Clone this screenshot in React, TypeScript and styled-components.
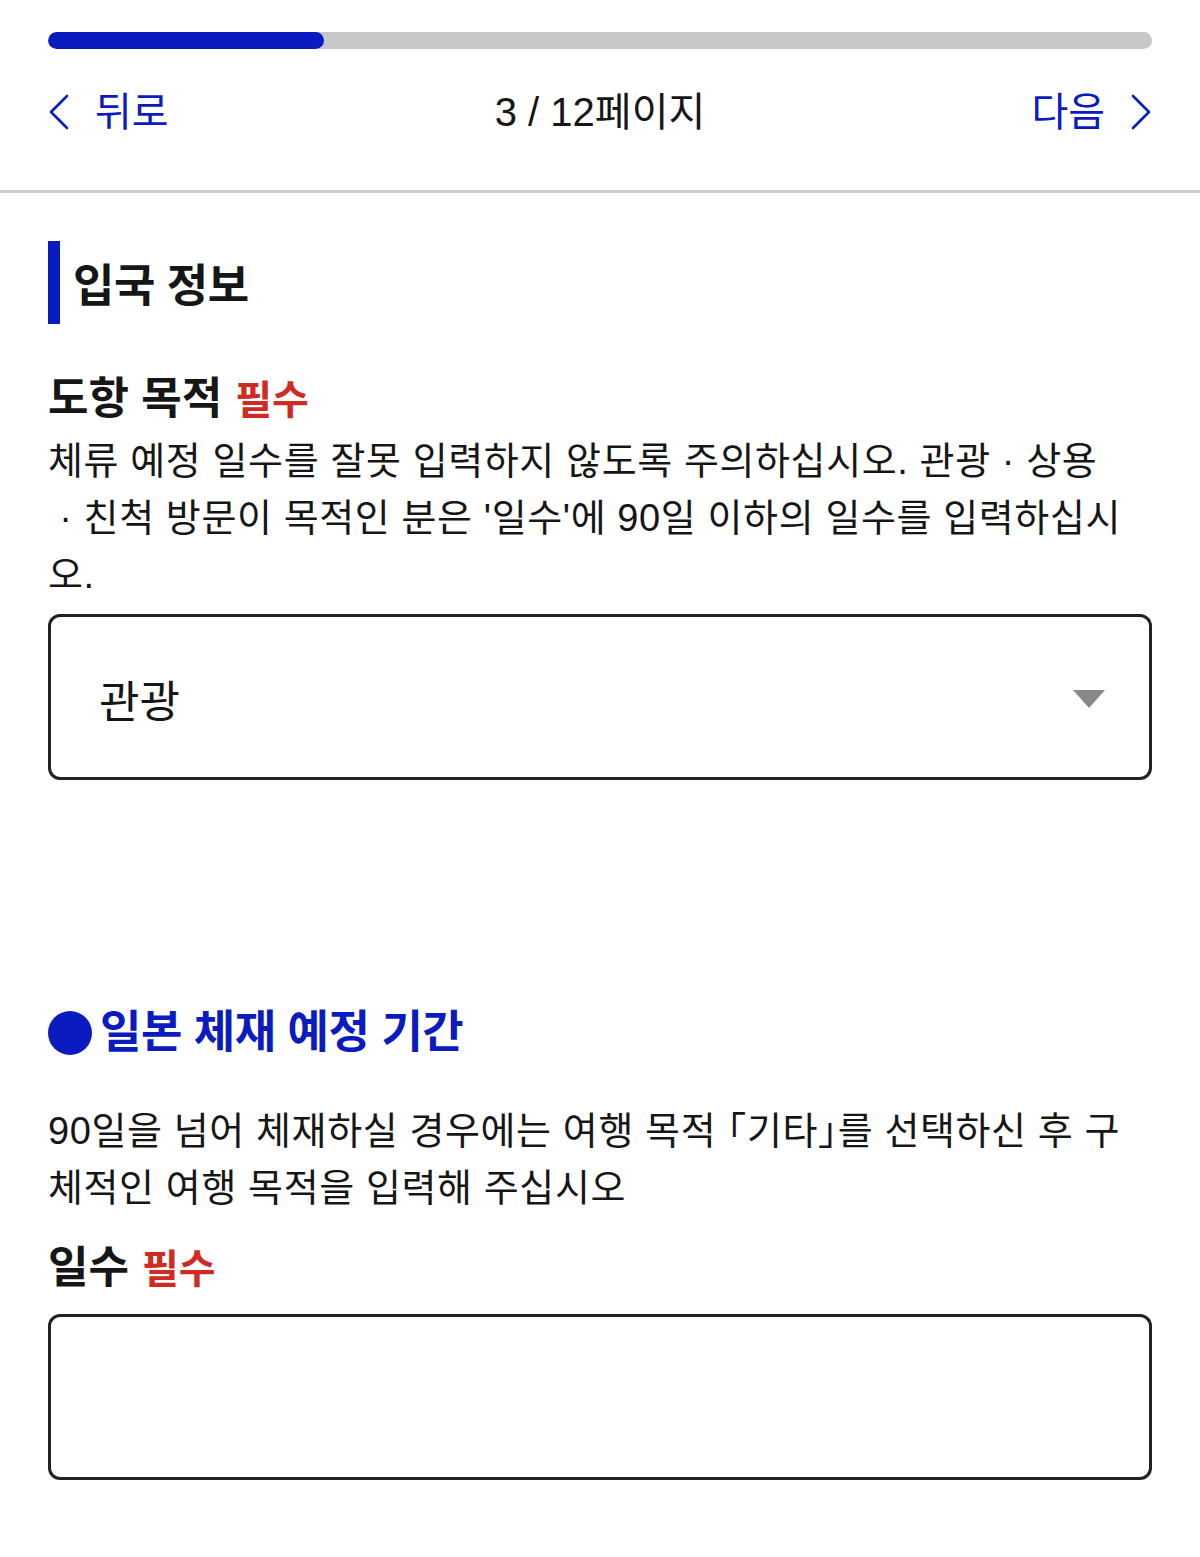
import React from "react";
import styled, { createGlobalStyle } from "styled-components";

const colors = {
  blue: "#0a1bbf",
  red: "#cf2a24",
  text: "#161616",
  track: "#c8c8ca",
  line: "#cccccc",
  border: "#222222",
  arrow: "#888888",
};

const GlobalStyle = createGlobalStyle`
  html, body {
    margin: 0;
    padding: 0;
    background: #ffffff;
  }
  body {
    font-family: "Liberation Sans", "Noto Sans CJK KR", sans-serif;
    color: ${colors.text};
  }
  * {
    box-sizing: border-box;
  }
`;

const ChevronLeft = () => (
  <svg width="21" height="36" viewBox="0 0 21 36" fill="none">
    <polyline
      points="19,2 3,18 19,34"
      stroke={colors.blue}
      strokeWidth="2.6"
      strokeLinecap="round"
      strokeLinejoin="round"
    />
  </svg>
);

const ChevronRight = () => (
  <svg width="21" height="36" viewBox="0 0 21 36" fill="none">
    <polyline
      points="2,2 18,18 2,34"
      stroke={colors.blue}
      strokeWidth="2.6"
      strokeLinecap="round"
      strokeLinejoin="round"
    />
  </svg>
);

const CaretDown = () => (
  <svg width="32" height="18" viewBox="0 0 32 18">
    <polygon points="0,0 32,0 16,18" fill={colors.arrow} />
  </svg>
);

const App = () => {
  const current = 3;
  const total = 12;

  return (
    <>
      <GlobalStyle />
      <Header>
        <Progress>
          <ProgressFill style={{ width: `${(current / total) * 100}%` }} />
        </Progress>
        <Nav>
          <NavButton>
            <ChevronLeft />
            <span>뒤로</span>
          </NavButton>
          <PageCount>
            {current} / {total}페이지
          </PageCount>
          <NavButton>
            <span>다음</span>
            <ChevronRight />
          </NavButton>
        </Nav>
      </Header>

      <Main>
        <SectionTitle>입국 정보</SectionTitle>

        <Label>
          도항 목적<Required>필수</Required>
        </Label>
        <Help>
          체류 예정 일수를 잘못 입력하지 않도록 주의하십시오. 관광 · 상용
          <br />
          {"\u00a0"}· 친척 방문이 목적인 분은 '일수'에 90일 이하의 일수를
          입력하십시
          <br />
          오.
        </Help>
        <SelectBox>
          <span>관광</span>
          <CaretDown />
        </SelectBox>

        <SubTitle>
          <Dot />
          일본 체재 예정 기간
        </SubTitle>
        <Help $spaced>
          90일을 넘어 체재하실 경우에는 여행 목적 「기타」를 선택하신 후 구
          <br />
          체적인 여행 목적을 입력해 주십시오
        </Help>

        <Label $tight>
          일수<Required>필수</Required>
        </Label>
        <TextInput type="text" />
      </Main>
    </>
  );
};

export default App;

const Header = styled.header`
  padding: 32px 48px 0;
  border-bottom: 3px solid ${colors.line};
`;

const Progress = styled.div`
  height: 17px;
  border-radius: 9px;
  background: ${colors.track};
  overflow: hidden;
`;

const ProgressFill = styled.div`
  height: 100%;
  border-radius: 9px;
  background: ${colors.blue};
`;

const Nav = styled.nav`
  display: flex;
  align-items: center;
  justify-content: space-between;
  height: 60px;
  margin: 33px 0 48px;
`;

const NavButton = styled.a`
  display: flex;
  align-items: center;
  gap: 26px;
  color: ${colors.blue};
  font-size: 40px;
  line-height: 1;
  cursor: pointer;

  svg {
    display: block;
  }
`;

const PageCount = styled.div`
  font-size: 40px;
  line-height: 1;
  color: ${colors.text};
`;

const Main = styled.main`
  padding: 48px 48px 79px;
`;

const SectionTitle = styled.h2`
  display: flex;
  align-items: center;
  min-height: 83px;
  margin: 0;
  padding-left: 13px;
  border-left: 12px solid ${colors.blue};
  font-size: 45px;
  font-weight: 700;
  letter-spacing: -0.5px;
  color: ${colors.text};
`;

const Label = styled.div<{ $tight?: boolean }>`
  display: flex;
  align-items: baseline;
  margin-top: ${({ $tight }) => ($tight ? "26px" : "50px")};
  font-size: 44px;
  font-weight: 700;
  line-height: 50px;
  color: ${colors.text};
`;

const Required = styled.span`
  margin-left: 13px;
  font-size: 40px;
  font-weight: 700;
  color: ${colors.red};
`;

const Help = styled.p<{ $spaced?: boolean }>`
  margin: ${({ $spaced }) => ($spaced ? "45px 0 0" : "8px 0 0")};
  font-size: 38px;
  line-height: 57px;
  letter-spacing: 0.6px;
  font-feature-settings: "halt";
  color: ${colors.text};
`;

const SelectBox = styled.div`
  display: flex;
  align-items: center;
  justify-content: space-between;
  height: 166px;
  margin-top: 10px;
  padding: 4px 44px 0 48px;
  border: 3px solid ${colors.border};
  border-radius: 12px;
  font-size: 44px;
  color: ${colors.text};
  cursor: pointer;

  svg {
    margin-top: -1px;
  }
`;

const SubTitle = styled.h3`
  display: flex;
  align-items: center;
  gap: 8px;
  margin: 228px 0 0;
  font-size: 45px;
  font-weight: 700;
  line-height: 50px;
  letter-spacing: -0.5px;
  color: ${colors.blue};
`;

const Dot = styled.span`
  width: 44px;
  height: 44px;
  border-radius: 50%;
  background: ${colors.blue};
  flex-shrink: 0;
`;

const TextInput = styled.input`
  display: block;
  width: 100%;
  height: 166px;
  margin-top: 20px;
  padding: 0 48px;
  border: 3px solid ${colors.border};
  border-radius: 12px;
  font-family: inherit;
  font-size: 40px;
  color: ${colors.text};
  background: #ffffff;
  outline: none;
`;
